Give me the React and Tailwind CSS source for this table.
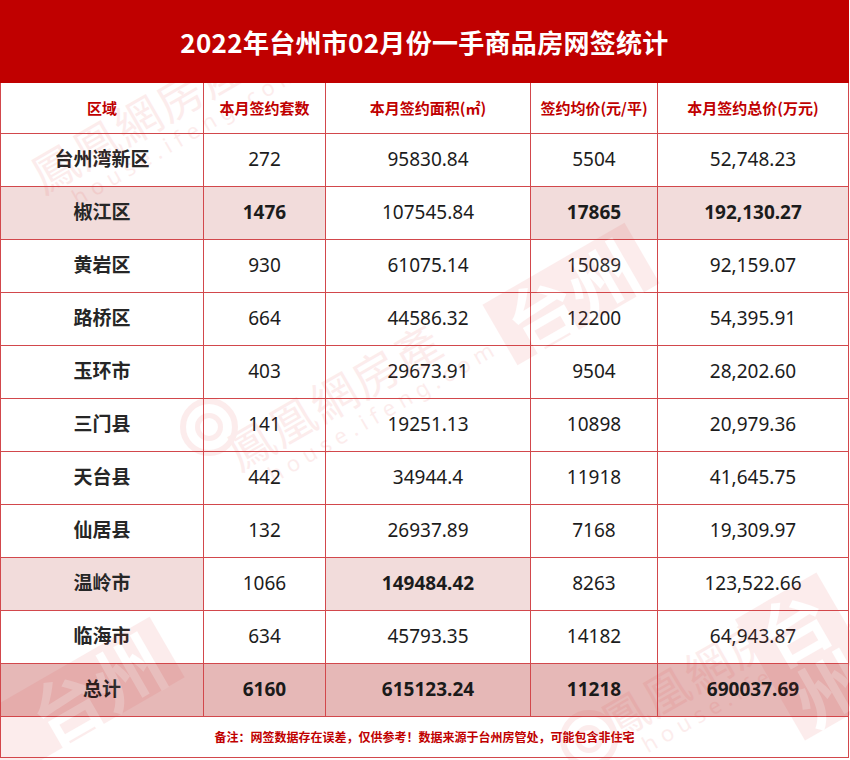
import React from "react";

const rows = [
  { name: "台州湾新区", a: "272", b: "95830.84", c: "5504", d: "52,748.23" },
  { name: "椒江区", a: "1476", b: "107545.84", c: "17865", d: "192,130.27", hl: ["name", "a", "c", "d"] },
  { name: "黄岩区", a: "930", b: "61075.14", c: "15089", d: "92,159.07" },
  { name: "路桥区", a: "664", b: "44586.32", c: "12200", d: "54,395.91" },
  { name: "玉环市", a: "403", b: "29673.91", c: "9504", d: "28,202.60" },
  { name: "三门县", a: "141", b: "19251.13", c: "10898", d: "20,979.36" },
  { name: "天台县", a: "442", b: "34944.4", c: "11918", d: "41,645.75" },
  { name: "仙居县", a: "132", b: "26937.89", c: "7168", d: "19,309.97" },
  { name: "温岭市", a: "1066", b: "149484.42", c: "8263", d: "123,522.66", hl: ["name", "b"] },
  { name: "临海市", a: "634", b: "45793.35", c: "14182", d: "64,943.87" },
];

const font = { fontFamily: '"Noto Sans", "Noto Sans CJK SC", sans-serif' };
const cjk = { fontFamily: '"Noto Sans CJK SC", "Noto Sans", sans-serif' };

function Cell({ children, hl, bold, name }) {
  return (
    <td
      className={
        "border border-[#d2484c] text-center align-middle p-0 " +
        (hl ? "bg-[#f2dcdb] " : "") +
        (bold || hl ? "font-bold " : "font-normal ") +
        (name ? "text-[#262626]" : "text-[#1c1c1c]")
      }
    >
      {children}
    </td>
  );
}

function Brand({ className }) {
  return (
    <div className={"absolute -rotate-[30deg] origin-left text-[#e23a3a] " + className} style={cjk}>
      <div className="text-[46px] leading-none tracking-[2px]">鳳凰網房產</div>
      <div className="text-[22px] leading-none mt-1 ml-6 tracking-[6px]" style={font}>house.ifeng.com</div>
    </div>
  );
}

function Tag({ className }) {
  return (
    <div className={"absolute -rotate-[30deg] origin-left bg-[#e23a3a] px-3 " + className}>
      <div className="text-[70px] leading-none text-white font-bold" style={cjk}>台州</div>
    </div>
  );
}

function Logo({ className }) {
  return (
    <div className={"absolute w-[58px] h-[58px] rounded-full border-[6px] border-[#e23a3a] flex items-center justify-center " + className}>
      <div className="w-[28px] h-[28px] rounded-full border-[5px] border-[#e23a3a]" />
    </div>
  );
}

function Watermark() {
  return (
    <div className="absolute left-0 right-0 top-[83px] bottom-0 pointer-events-none overflow-hidden opacity-[0.09]">
      <Brand className="left-[40px] top-[70px]" />
      <Logo className="left-[180px] top-[315px]" />
      <Brand className="left-[236px] top-[347px]" />
      <Tag className="left-[500px] top-[217px]" />
      <Tag className="left-[-20px] top-[637px] pl-16" />
      <Logo className="left-[560px] top-[627px]" />
      <Brand className="left-[610px] top-[617px]" />
      <Tag className="left-[770px] top-[527px]" />
    </div>
  );
}

export default function App() {
  return (
    <div className="w-[850px] h-[760px] bg-white relative overflow-hidden" style={font}>
      <div className="w-[849px] h-[759px] flex flex-col">
        <div className="h-[83px] bg-[#c00000] flex items-center justify-center shrink-0">
          <h1 className="text-white text-[26px] font-bold tracking-[0.3px]" style={cjk}>
            2022年台州市02月份一手商品房网签统计
          </h1>
        </div>
        <table className="w-full border-collapse table-fixed text-[19px]">
          <colgroup>
            <col className="w-[203px]" />
            <col className="w-[122px]" />
            <col className="w-[205px]" />
            <col className="w-[127px]" />
            <col />
          </colgroup>
          <thead>
            <tr className="h-[50px]">
              {["区域", "本月签约套数", "本月签约面积(㎡)", "签约均价(元/平)", "本月签约总价(万元)"].map((h) => (
                <th
                  key={h}
                  className="border border-[#d2484c] border-t-0 text-[#c00000] text-[15px] font-bold text-center align-middle p-0"
                  style={cjk}
                >
                  {h}
                </th>
              ))}
            </tr>
          </thead>
          <tbody>
            {rows.map((r) => {
              const hl = r.hl || [];
              return (
                <tr key={r.name} className="h-[53px]">
                  <Cell name bold hl={hl.includes("name")}>{r.name}</Cell>
                  <Cell hl={hl.includes("a")}>{r.a}</Cell>
                  <Cell hl={hl.includes("b")}>{r.b}</Cell>
                  <Cell hl={hl.includes("c")}>{r.c}</Cell>
                  <Cell hl={hl.includes("d")}>{r.d}</Cell>
                </tr>
              );
            })}
            <tr className="h-[53px] bg-[#e6b8b7] font-bold text-[#1a1a1a]">
              {["总计", "6160", "615123.24", "11218", "690037.69"].map((v) => (
                <td key={v} className="border border-[#d2484c] text-center align-middle p-0">
                  {v}
                </td>
              ))}
            </tr>
            <tr className="h-[41px]">
              <td
                colSpan={5}
                className="border border-[#d2484c] text-center align-middle p-0 text-[12px] font-bold text-[#c00000]"
                style={cjk}
              >
                备注：网签数据存在误差，仅供参考！数据来源于台州房管处，可能包含非住宅
              </td>
            </tr>
          </tbody>
        </table>
      </div>
      <Watermark />
    </div>
  );
}
